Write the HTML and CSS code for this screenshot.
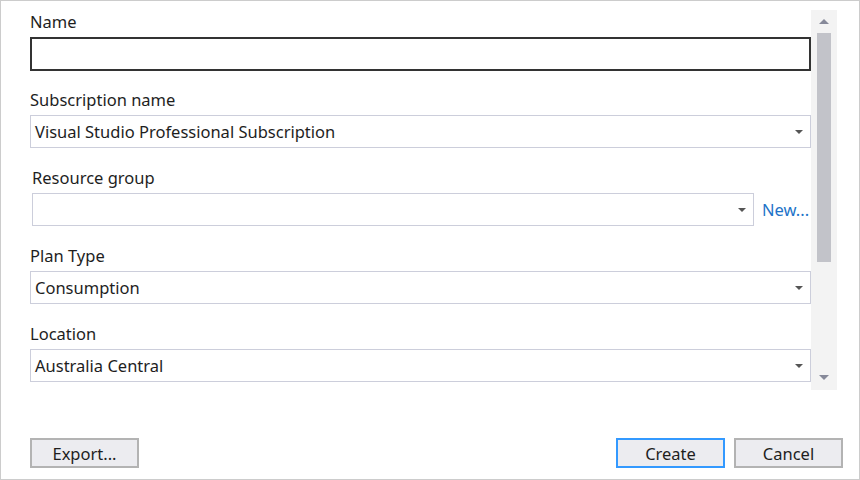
FILE: index.html
```html
<!DOCTYPE html>
<html lang="en">
<head>
    <meta charset="UTF-8">
    <title>Create App Service</title>
    <link rel="stylesheet" href="styles.css">
</head>
<body>
    <div class="dialog">
        <div class="content">
            <div class="form">
                <div class="field field-name">
                    <label class="label">Name</label>
                    <div class="textbox"></div>
                </div>

                <div class="field">
                    <label class="label">Subscription name</label>
                    <div class="select">
                        <span class="value">Visual Studio Professional Subscription</span>
                        <span class="caret"></span>
                    </div>
                </div>

                <div class="field field-indent">
                    <label class="label">Resource group</label>
                    <div class="select-row">
                        <div class="select">
                            <span class="value"></span>
                            <span class="caret"></span>
                        </div>
                        <a class="link" href="#">New...</a>
                    </div>
                </div>

                <div class="field">
                    <label class="label">Plan Type</label>
                    <div class="select">
                        <span class="value">Consumption</span>
                        <span class="caret"></span>
                    </div>
                </div>

                <div class="field">
                    <label class="label">Location</label>
                    <div class="select">
                        <span class="value">Australia Central</span>
                        <span class="caret"></span>
                    </div>
                </div>
            </div>

            <div class="scrollbar">
                <span class="arrow arrow-up"></span>
                <div class="track">
                    <div class="thumb"></div>
                </div>
                <span class="arrow arrow-down"></span>
            </div>
        </div>

        <div class="footer">
            <button class="btn">Export...</button>
            <div class="actions">
                <button class="btn btn-default">Create</button>
                <button class="btn">Cancel</button>
            </div>
        </div>
    </div>
</body>
</html>
```

FILE: styles.css
```css
* {
    margin: 0;
    padding: 0;
    box-sizing: border-box;
}

body {
    background-color: #ffffff;
    font-family: 'Noto Sans', 'Open Sans', sans-serif;
    font-size: 16.5px;
    color: #1e1e1e;
}

.dialog {
    width: 860px;
    height: 480px;
    border: 1px solid #cccccc;
    display: flex;
    flex-direction: column;
}

.content {
    display: flex;
    padding-top: 9px;
}

/* Form column */
.form {
    width: 810px;
    padding-left: 29px;
    padding-top: 1px;
    display: flex;
    flex-direction: column;
    gap: 19px;
}

.field {
    display: flex;
    flex-direction: column;
    gap: 4px;
}

.field-name {
    margin-bottom: -1px;
}

.field-indent {
    padding-left: 2px;
}

.label {
    line-height: 22px;
    height: 22px;
}

.textbox {
    height: 34px;
    border: 2px solid #333333;
    background-color: #ffffff;
}

.select {
    height: 33px;
    border: 1px solid #cccedb;
    background-color: #ffffff;
    display: flex;
    align-items: center;
    justify-content: space-between;
    padding: 0 7px 0 4px;
}

.value {
    line-height: 20px;
}

.caret {
    width: 0;
    height: 0;
    border-left: 4px solid transparent;
    border-right: 4px solid transparent;
    border-top: 4px solid #555555;
}

.select-row {
    display: flex;
    align-items: center;
    gap: 8px;
}

.select-row .select {
    width: 722px;
}

.link {
    color: #1e73c8;
    text-decoration: none;
}

/* Scrollbar */
.scrollbar {
    width: 26px;
    height: 380px;
    background-color: #f3f3f3;
    display: flex;
    flex-direction: column;
    align-items: center;
}

.arrow {
    width: 0;
    height: 0;
    border-left: 5px solid transparent;
    border-right: 5px solid transparent;
}

.arrow-up {
    margin-top: 9px;
    border-bottom: 5px solid #868999;
}

.arrow-down {
    margin-bottom: 10px;
    border-top: 5px solid #868999;
}

.track {
    flex: 1;
    width: 14px;
    padding-top: 9px;
    padding-bottom: 113px;
}

.thumb {
    height: 100%;
    background-color: #c2c3c9;
}

/* Footer */
.footer {
    margin-top: auto;
    display: flex;
    justify-content: space-between;
    padding: 0 16px 11px 29px;
}

.actions {
    display: flex;
    gap: 9px;
}

.btn {
    font-family: inherit;
    font-size: 16.5px;
    color: #1e1e1e;
    height: 30px;
    width: 109px;
    background-color: #ececf0;
    border: 2px solid #b3b3b3;
}

.btn-default {
    border-color: #3399ff;
}
```
